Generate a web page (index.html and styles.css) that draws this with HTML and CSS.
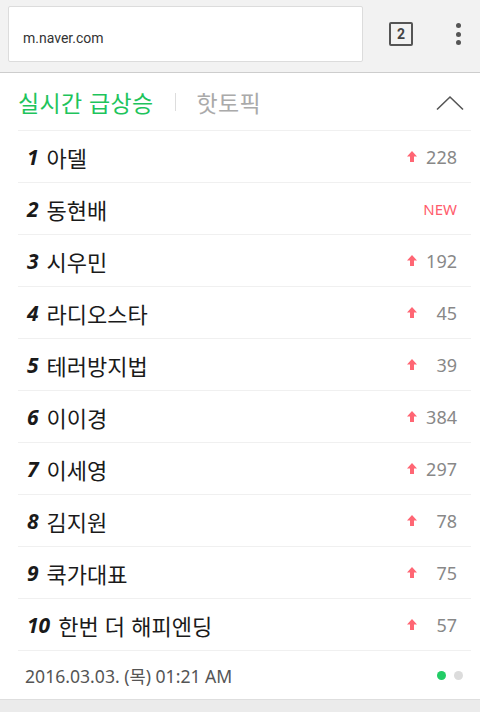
FILE: index.html
```html
<!DOCTYPE html>
<html lang="ko">

<head>
    <meta charset="UTF-8" />
    <meta name="viewport" content="width=device-width, initial-scale=1.0" />
    <link rel="stylesheet" href="styles.css">
    <title>NAVER</title>
</head>

<body>
    <div class="toolbar">
        <div class="address">m.naver.com</div>
        <div class="tab-count">2</div>
        <div class="menu-dots"><span></span><span></span><span></span></div>
    </div>
    <div class="panel">
        <div class="panel-head">
            <span class="tab tab-on">실시간 급상승</span>
            <span class="tab-bar"></span>
            <span class="tab">핫토픽</span>
            <svg class="fold" width="28" height="16" viewBox="0 0 28 16">
                <polyline points="1,14.5 14,2 27,14.5" fill="none" stroke="#555" stroke-width="1.6" />
            </svg>
        </div>
        <ol class="rank-list">
            <li class="rank-row"><span class="rank-num">1</span><span class="keyword">아델</span><span class="up"></span><span class="count">228</span></li>
            <li class="rank-row"><span class="rank-num">2</span><span class="keyword">동현배</span><span class="new">NEW</span></li>
            <li class="rank-row"><span class="rank-num">3</span><span class="keyword">시우민</span><span class="up"></span><span class="count">192</span></li>
            <li class="rank-row"><span class="rank-num">4</span><span class="keyword">라디오스타</span><span class="up"></span><span class="count">45</span></li>
            <li class="rank-row"><span class="rank-num">5</span><span class="keyword">테러방지법</span><span class="up"></span><span class="count">39</span></li>
            <li class="rank-row"><span class="rank-num">6</span><span class="keyword">이이경</span><span class="up"></span><span class="count">384</span></li>
            <li class="rank-row"><span class="rank-num">7</span><span class="keyword">이세영</span><span class="up"></span><span class="count">297</span></li>
            <li class="rank-row"><span class="rank-num">8</span><span class="keyword">김지원</span><span class="up"></span><span class="count">78</span></li>
            <li class="rank-row"><span class="rank-num">9</span><span class="keyword">쿡가대표</span><span class="up"></span><span class="count">75</span></li>
            <li class="rank-row"><span class="rank-num">10</span><span class="keyword">한번 더 해피엔딩</span><span class="up"></span><span class="count">57</span></li>
        </ol>
        <div class="panel-foot">
            <span class="stamp">2016.03.03. (목) 01:21 AM</span>
            <span class="pager"><i class="dot dot-on"></i><i class="dot"></i></span>
        </div>
    </div>
    <div class="bottom"></div>
</body>

</html>
```

FILE: styles.css
```css
* {
    margin: 0;
    padding: 0;
    box-sizing: border-box;
}

body {
    width: 480px;
    height: 712px;
    overflow: hidden;
    background-color: #ebebeb;
    font-family: "Noto Sans", "Noto Sans CJK KR", sans-serif;
}

.toolbar {
    display: flex;
    align-items: center;
    height: 73px;
    padding: 0 0 4px 8px;
    background-color: #f2f2f2;
    border-bottom: 1px solid #cdcdcd;
}

.address {
    width: 355px;
    height: 56px;
    display: flex;
    align-items: center;
    padding: 7px 0 0 14px;
    background-color: #fff;
    border: 1px solid #dcdcdc;
    border-radius: 2px;
    font-family: Roboto, sans-serif;
    font-size: 14px;
    color: #333;
}

.tab-count {
    width: 24px;
    height: 24px;
    margin-left: 26px;
    border: 2.5px solid #555;
    border-radius: 2px;
    display: flex;
    align-items: center;
    justify-content: center;
    font-family: Roboto, sans-serif;
    font-weight: 700;
    font-size: 14px;
    color: #444;
}

.menu-dots {
    display: flex;
    flex-direction: column;
    gap: 3.5px;
    margin-left: 43px;
}

.menu-dots span {
    width: 5px;
    height: 5px;
    border-radius: 50%;
    background-color: #555;
}

.panel {
    background-color: #fff;
    height: 627px;
    border-bottom: 1px solid #dedede;
}

.panel-head {
    display: flex;
    align-items: center;
    height: 58px;
    margin: 0 9px 0 18px;
    border-bottom: 1px solid #f0f0f0;
}

.tab {
    font-family: "Noto Sans CJK KR", sans-serif;
    font-size: 23px;
    color: #aaa;
    letter-spacing: 0.3px;
}

.tab-on {
    color: #1ec45c;
}

.tab-bar {
    width: 1px;
    height: 18px;
    margin: 0 21px 0 21px;
    background-color: #ddd;
}

.fold {
    margin-left: auto;
    margin-right: 7px;
    margin-top: 2px;
}

.rank-list {
    list-style: none;
    margin: 0 9px 0 18px;
}

.rank-row {
    display: flex;
    align-items: center;
    height: 52px;
    padding: 0 14px 0 9px;
    border-bottom: 1px solid #f0f0f0;
}

.rank-num {
    font-family: "Noto Sans", sans-serif;
    font-weight: 700;
    font-style: italic;
    font-size: 21px;
    color: #1a1a1a;
    margin-right: 8px;
}

.keyword {
    font-family: "Noto Sans CJK KR", sans-serif;
    font-size: 22px;
    color: #1a1a1a;
}

.up {
    margin-left: auto;
    width: 10px;
    height: 11px;
    background-color: #ff6674;
    clip-path: polygon(50% 0, 100% 50%, 70% 50%, 70% 100%, 30% 100%, 30% 50%, 0 50%);
}

.count {
    width: 40px;
    text-align: right;
    font-family: "Noto Sans", sans-serif;
    font-size: 18px;
    color: #888;
}

.new {
    margin-left: auto;
    font-family: "Noto Sans", sans-serif;
    font-size: 15px;
    color: #ff5c6c;
}

.panel-foot {
    display: flex;
    align-items: center;
    height: 47px;
    padding: 1px 17px 0 25px;
}

.stamp {
    font-family: "Noto Sans", "Noto Sans CJK KR", sans-serif;
    font-size: 17.6px;
    color: #555;
}

.pager {
    margin-left: auto;
    display: flex;
    gap: 8px;
}

.dot {
    width: 9px;
    height: 9px;
    border-radius: 50%;
    background-color: #dcdcdc;
}

.dot-on {
    background-color: #22cc66;
}

.bottom {
    height: 12px;
}
```
